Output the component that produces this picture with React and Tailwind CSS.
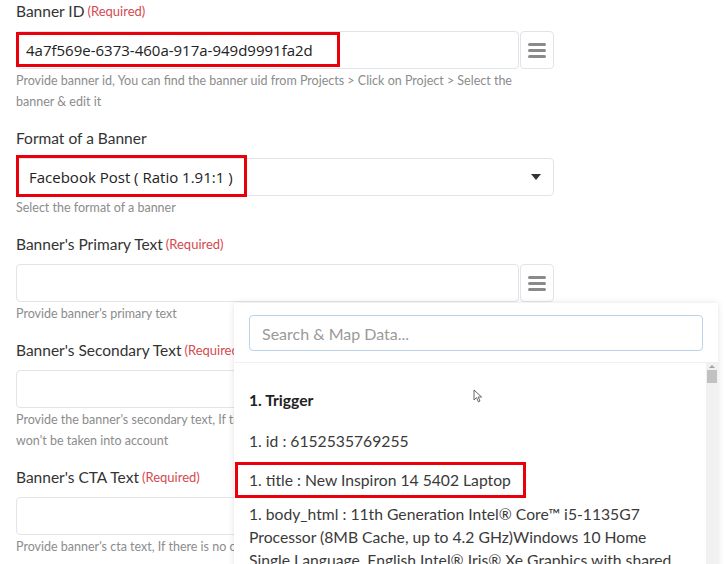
import { useState } from 'react';

const helperCls = "pt-px text-[12.5px] leading-[21px] text-[#8c8c8c]";

function Label({ text, required }) {
  return (
    <div className="h-[23px] mb-[8px] flex items-center whitespace-nowrap">
      <span className="text-[15.5px] text-[#333]">{text}</span>
      {required && <span className="ml-[3px] text-[13px] text-[#d44a4f]">(Required)</span>}
    </div>
  );
}

function MapButton() {
  return (
    <button className="ml-px w-[34px] h-[38px] shrink-0 rounded-[4px] border border-[#e3e3ea] bg-white flex flex-col items-center justify-center gap-[3px]">
      <span className="block w-[18px] h-[3px] rounded-full bg-[#8a8a8a]" />
      <span className="block w-[18px] h-[3px] rounded-full bg-[#8a8a8a]" />
      <span className="block w-[18px] h-[3px] rounded-full bg-[#8a8a8a]" />
    </button>
  );
}

function TextField({ value, highlight }) {
  return (
    <div className="flex w-[538px]">
      <div className="relative flex-1 h-[38px] rounded-[4px] border border-[#e3e3ea] bg-white flex items-center pl-[9px]">
        <span className="font-['Open_Sans'] text-[15px] text-[#222] whitespace-nowrap">{value}</span>
        {highlight && (
          <span className="absolute left-[-1px] top-0 w-[324px] h-[35px] border-[3px] border-[#e8000b]" />
        )}
      </div>
      <MapButton />
    </div>
  );
}

function Field({ label, required, children, helper }) {
  return (
    <div className="mb-[15px]">
      <Label text={label} required={required} />
      {children}
      <div className={helperCls}>{helper}</div>
    </div>
  );
}

const rows = [
  { id: 'id', text: '1. id : 6152535769255' },
  { id: 'title', text: '1. title : New Inspiron 14 5402 Laptop', boxed: true },
];

export default function App() {
  const [query, setQuery] = useState('');

  return (
    <div className="relative w-[726px] h-[564px] overflow-hidden bg-white font-['Lato',sans-serif]">
      <div className="pl-4 w-[570px]">
        <Field
          label="Banner ID"
          required
          helper={<>Provide banner id, You can find the banner uid from Projects &gt; Click on Project &gt; Select the<br />banner &amp; edit it</>}
        >
          <TextField value="4a7f569e-6373-460a-917a-949d9991fa2d" highlight />
        </Field>

        <Field label="Format of a Banner" helper="Select the format of a banner">
          <div className="relative w-[538px] h-[38px] rounded-[4px] border border-[#e3e3ea] bg-white flex items-center pl-[12px] pr-[12px]">
            <span className="font-['Open_Sans'] text-[15px] text-[#222] whitespace-nowrap">Facebook Post ( Ratio 1.91:1 )</span>
            <span className="ml-auto w-0 h-0 border-l-[5px] border-r-[5px] border-t-[6px] border-l-transparent border-r-transparent border-t-[#333]" />
            <span className="absolute left-[-1px] top-[-4px] w-[231px] h-[42px] border-[3px] border-[#e8000b]" />
          </div>
        </Field>

        <Field label="Banner's Primary Text" required helper="Provide banner's primary text">
          <TextField value="" />
        </Field>

        <Field
          label="Banner's Secondary Text"
          required
          helper={<>Provide the banner's secondary text, If there is no secondary text then it<br />won't be taken into account</>}
        >
          <TextField value="" />
        </Field>

        <Field label="Banner's CTA Text" required helper="Provide banner's cta text, If there is no cta text then it won't be shown">
          <TextField value="" />
        </Field>
      </div>

      {/* map data dropdown */}
      <div className="absolute left-[234px] top-[303px] w-[484px] h-[280px] bg-white shadow-[0_0_6px_rgba(0,0,0,0.12)] flex flex-col">
        <div className="px-[15px] pt-[12px] pb-[11px] border-b border-[#f0f0f3]">
          <input
            value={query}
            onChange={(e) => setQuery(e.target.value)}
            placeholder="Search & Map Data..."
            className="w-[454px] h-[36px] rounded-[4px] border border-[#b9d3ea] px-[12px] text-[16px] text-[#333] placeholder:text-[#9a9a9a] outline-none font-['Lato',sans-serif]"
          />
        </div>
        <div className="relative flex flex-1">
          <div className="flex-1 pl-[15px] pt-[26px] text-[15.7px] text-[#3a3a3a]">
            <div className="h-[23px] leading-[23px] font-bold text-[#222]">1. Trigger</div>
            <div className="mt-[10px] flex flex-col">
              {rows.map((r) => (
                <div key={r.id} className="relative h-[39px] flex items-center">
                  <span className="whitespace-nowrap">{r.text}</span>
                  {r.boxed && (
                    <span className="absolute left-[-14px] top-[1px] w-[291px] h-[36px] border-[3px] border-[#e8000b]" />
                  )}
                </div>
              ))}
            </div>
            <div className="mt-[3px] leading-[23px] pr-[30px]">
              1. body_html : 11th Generation Intel® Core™ i5-1135G7 Processor (8MB Cache, up to 4.2 GHz)Windows 10 Home Single Language, English Intel® Iris® Xe Graphics with shared
            </div>
          </div>
          <div className="w-[12px] bg-[#f1f1f1] flex flex-col items-center">
            <span className="mt-[2px] w-0 h-0 border-l-[3px] border-r-[3px] border-b-[3px] border-l-transparent border-r-transparent border-b-[#a3a3a3]" />
            <span className="mt-[2px] w-[10px] h-[13px] bg-[#c1c1c1]" />
          </div>
          <svg className="absolute left-[239px] top-[26px]" width="10" height="14" viewBox="0 0 10 14">
            <path d="M1 1 L1 11 L3.5 8.6 L5.4 12.8 L7 12 L5.2 8 L8.6 8 Z" fill="white" stroke="#555" strokeWidth="0.9" strokeLinejoin="round" />
          </svg>
        </div>
      </div>
    </div>
  );
}
